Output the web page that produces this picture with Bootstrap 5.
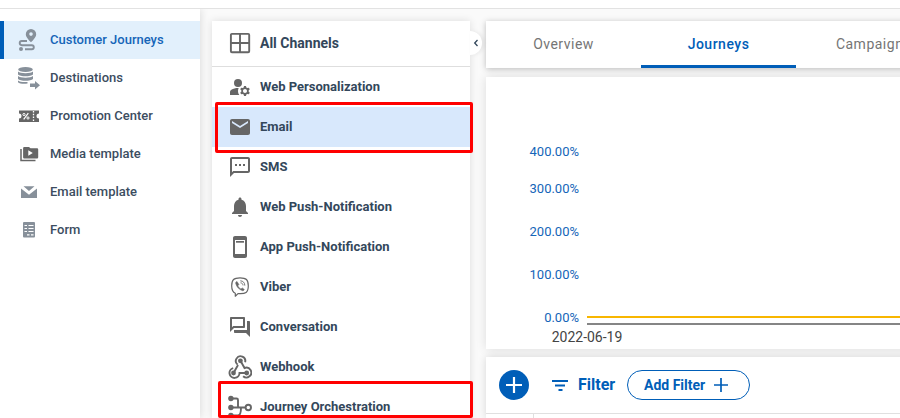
<!DOCTYPE html>
<html lang="en">
<head>
<meta charset="utf-8">
<meta name="viewport" content="width=device-width, initial-scale=1">
<title>Customer Journeys</title>
<link href="https://cdn.jsdelivr.net/npm/bootstrap@5.3.0/dist/css/bootstrap.min.css" rel="stylesheet">
<style>
body { font-family: Roboto, "Liberation Sans", sans-serif; font-size: 13px; line-height: 20px; background: #fafafa; color: #33475b; }
svg { flex: none; display: block; }
.app-shell { height: 418px; }
.top-strip { height: 9px; border-bottom: 1px solid #e2e2e2; }
.side-menu { width: 200px; padding-top: 12px; box-shadow: 1px 0 8px rgba(0,0,0,.12); clip-path: inset(0 -12px 0 0); }
.side-link { height: 38px; gap: 10px; padding-left: 12px; border-left: 4px solid transparent; font-weight: 500; color: #3c4d5f; }
.side-link.current { background: #e2f0fc; border-color: #005eb8; color: #1565b8; }
.side-link svg { color: #87909a; }
.workspace { padding: 12px 0 0 12px; gap: 16px; }
.channel-panel { width: 258px; box-shadow: 0 0 8px rgba(0,0,0,.12); }
.channel-head { height: 46px; border-bottom: 1px solid #dedede; font-size: 14px; padding: 0 0 2px 16px; gap: 8px; font-weight: 700; }
.channel-head svg { margin-top: 2px; }
.channel-item { height: 40px; padding-left: 16px; gap: 8px; font-weight: 700; }
.channel-item.current { background: #d8e8fc; }
.channel-panel svg { color: #666; }
.outline-red { position: absolute; border: 3px solid #f00; border-radius: 2px; z-index: 3; }
.outline-email { left: 3px; right: -3px; top: -5px; height: 51px; }
.outline-orch { left: 6px; right: -3px; top: -6px; height: 37px; }
.fold-btn { position: absolute; left: 258px; top: 10px; width: 12px; height: 24px; border-radius: 0 12px 12px 0; box-shadow: 2px 0 4px rgba(0,0,0,.07); }
.main-col { gap: 8px; }
.tab-bar { height: 47px; margin-bottom: 1px; box-shadow: 0 1px 6px rgba(0,0,0,.25); overflow: visible; }
.tab-cell { width: 155px; flex: none; font-size: 14px; letter-spacing: .5px; padding-top: 2px; color: #757575; border-bottom: 3px solid transparent; }
.tab-cell.current { color: #005eb8; font-weight: 500; border-color: #005eb8; }
.chart-box { height: 272px; box-shadow: 0 0 10px rgba(0,0,0,.12); }
.filter-box { height: 61px; box-shadow: 0 0 8px rgba(0,0,0,.14); color: #005eb8; }
.filter-row { height: 57px; border-bottom: 1px solid #e0e0e0; padding-left: 13px; }
.add-round { width: 30px; height: 30px; background: #005eb8; color: #fff; margin-right: 20px; }
.filter-word { font-size: 16px; font-weight: 700; margin: 0 11px 0 7px; width: 38px; }
.add-pill { height: 30px; width: 123px; border: 1px solid #005eb8; padding: 0 0 0 16px; font-size: 14px; font-weight: 700; color: #005eb8; }
.table-edge { width: 48px; height: 5px; border-right: 1px solid #e0e0e0; }
</style>
<script src="https://cdn.jsdelivr.net/npm/bootstrap@5.3.0/dist/js/bootstrap.bundle.min.js"></script>
</head>
<body>
<div class="app-shell d-flex flex-column overflow-hidden">
  <header class="top-strip bg-white flex-shrink-0"></header>
  <div class="d-flex flex-grow-1 overflow-hidden">
    <nav class="side-menu bg-white flex-shrink-0">
      <div class="side-link current d-flex align-items-center">
        <svg width="24" height="24" viewBox="0 0 24 24"><path fill="currentColor" fill-rule="evenodd" d="M15 1a5.2 5.2 0 0 0-5.2 5.2c0 3.6 5.2 8 5.2 8s5.2-4.4 5.2-8A5.2 5.2 0 0 0 15 1zm0 3.3a1.8 1.8 0 1 1 0 3.6 1.8 1.8 0 0 1 0-3.6z"/><path d="M11 13H5.8a1.9 1.9 0 0 0 0 4.2h10a2 2 0 0 1 0 4H9" fill="none" stroke="currentColor" stroke-width="1.9"/><circle cx="5" cy="21" r="2" fill="currentColor"/></svg>
        <span>Customer Journeys</span>
      </div>
      <div class="side-link d-flex align-items-center">
        <svg width="24" height="24" viewBox="0 0 24 24"><g fill="currentColor"><ellipse cx="9.5" cy="3.6" rx="7.3" ry="2.5"/><path d="M2 5.5c2 2.2 13 2.2 15 0v3c-2 2.4-13 2.4-15 0zM2 10c2 2.2 13 2.2 15 0v3c-2 2.4-13 2.4-15 0zM2 14.500c1.500 1.400 6 1.800 9.500 1.400v1.500c-3.500.8-8 .2-9.500-1.200z"/><path d="M14 17.500h5V15l5 4.300-5 4.200V21h-5z"/></g></svg>
        <span>Destinations</span>
      </div>
      <div class="side-link d-flex align-items-center">
        <svg width="24" height="24" viewBox="0 0 24 24"><path fill="#666" d="M3 6.500h20v3a2.500 2.500 0 0 0 0 5v3.500H3v-3.500a2.500 2.500 0 0 0 0-5z"/><g fill="none" stroke="#fff"><path d="M17.500 7v11" stroke-width="1.300" stroke-dasharray="1.500 1.300"/><path d="M12.300 9.200l-4.600 6.200" stroke-width="1.200"/><circle cx="8" cy="10.500" r="1.100"/><circle cx="12" cy="14" r="1.100"/></g></svg>
        <span>Promotion Center</span>
      </div>
      <div class="side-link d-flex align-items-center">
        <svg width="24" height="24" viewBox="0 0 24 24"><path d="M5 7v11.500h14.500" fill="none" stroke="#666" stroke-width="1.500"/><path fill="#666" fill-rule="evenodd" d="M8.500 5H13l1.500 1.200h6.300c.8 0 1.400.5 1.400 1.300v7.700c0 .8-.6 1.300-1.400 1.300H8.500c-.8 0-1.400-.5-1.400-1.300V6.300C7.100 5.500 7.700 5 8.500 5zM12.300 8.300v5.400l4.500-2.700z"/></svg>
        <span>Media template</span>
      </div>
      <div class="side-link d-flex align-items-center">
        <svg width="24" height="24" viewBox="0 0 24 24"><path fill="currentColor" d="M5 8.500l8 6.300 8-6.300V18H5zM7.500 6.200h11L13 11z"/></svg>
        <span>Email template</span>
      </div>
      <div class="side-link d-flex align-items-center">
        <svg width="24" height="24" viewBox="0 0 24 24"><rect x="7" y="4" width="12" height="15.500" rx="1" fill="currentColor"/><path d="M8.500 7.500H11M12.500 7.500h5M8.500 10.500H11M12.500 10.500h5M8.500 13.500H11M12.500 13.500h5M11 16.800h2.500M15 16.800h2.500" stroke="#fff" stroke-width="1.200"/></svg>
        <span>Form</span>
      </div>
    </nav>

    <div class="workspace d-flex flex-grow-1 overflow-hidden">
      <aside class="channel-panel bg-white flex-shrink-0 position-relative">
        <div class="channel-head d-flex align-items-center">
          <svg width="24" height="24" viewBox="0 0 24 24" fill="none" stroke="currentColor" stroke-width="1.900"><rect x="2.900" y="1.900" width="18.300" height="18.300" rx="1"/><path d="M12 2v18M3 11h18"/></svg>
          <span>All Channels</span>
        </div>
        <div class="fold-btn bg-white d-flex align-items-center justify-content-center"><svg width="12" height="12" viewBox="0 0 12 12" fill="none" stroke="#33475b" stroke-width="1.300"><path d="M7.500 3L4.700 6l2.800 3"/></svg></div>
        <div class="channel-item d-flex align-items-center">
          <svg width="24" height="24" viewBox="0 0 24 24" fill="currentColor"><circle cx="10" cy="8" r="4"/><path d="M10.670 13.020C10.450 13.010 10.230 13 10 13c-2.420 0-4.680.670-6.610 1.820C2.510 15.340 2 16.320 2 17.350V20h9.260C10.470 18.870 10 17.490 10 16c0-1.070.250-2.070.670-2.980z"/><path d="M20.750 16c0-.220-.030-.420-.060-.630l1.140-1.010-1-1.730-1.450.490c-.320-.270-.680-.480-1.080-.630L18 11h-2l-.3 1.490c-.4.150-.760.360-1.080.630l-1.450-.490-1 1.730 1.140 1.010c-.030.210-.060.410-.060.630s.030.420.060.630l-1.140 1.010 1 1.730 1.450-.490c.320.270.680.480 1.080.630L16 21h2l.3-1.490c.4-.150.760-.360 1.080-.630l1.450.490 1-1.730-1.140-1.010c.030-.210.060-.410.060-.630zM17 18c-1.100 0-2-.9-2-2s.9-2 2-2 2 .9 2 2-.9 2-2 2z"/></svg>
          <span>Web Personalization</span>
        </div>
        <div class="channel-item current d-flex align-items-center position-relative">
          <svg width="24" height="24" viewBox="0 0 24 24" fill="currentColor"><path d="M20 4H4c-1.100 0-1.990.9-1.990 2L2 18c0 1.100.9 2 2 2h16c1.100 0 2-.9 2-2V6c0-1.100-.9-2-2-2zm0 4l-8 5-8-5V6l8 5 8-5v2z"/></svg>
          <span>Email</span>
          <div class="outline-red outline-email"></div>
        </div>
        <div class="channel-item d-flex align-items-center">
          <svg width="24" height="24" viewBox="0 0 24 24" fill="currentColor"><path d="M20 2H4c-1.100 0-2 .9-2 2v18l4-4h14c1.100 0 2-.9 2-2V4c0-1.100-.9-2-2-2zm0 14H5.170L4 17.170V4h16v12zM7 9h2v2H7zm4 0h2v2h-2zm4 0h2v2h-2z"/></svg>
          <span>SMS</span>
        </div>
        <div class="channel-item d-flex align-items-center">
          <svg width="24" height="24" viewBox="0 0 24 24" fill="currentColor"><path d="M12 22c1.100 0 2-.9 2-2h-4c0 1.100.890 2 2 2zm6-6v-5c0-3.070-1.640-5.640-4.500-6.320V4c0-.830-.670-1.500-1.500-1.500s-1.500.670-1.500 1.500v.680C7.630 5.360 6 7.920 6 11v5l-2 2v1h16v-1l-2-2z"/></svg>
          <span>Web Push-Notification</span>
        </div>
        <div class="channel-item d-flex align-items-center">
          <svg width="24" height="24" viewBox="0 0 24 24" fill="currentColor"><path fill-rule="evenodd" d="M7 1h10c1.100 0 2 .9 2 2v18c0 1.100-.9 2-2 2H7c-1.100 0-2-.9-2-2V3c0-1.100.9-2 2-2zm0 4v14h10V5z"/><path d="M8 6h8v1.700H8z"/></svg>
          <span>App Push-Notification</span>
        </div>
        <div class="channel-item d-flex align-items-center">
          <svg width="24" height="24" viewBox="0 0 24 24" fill="none" stroke="currentColor" stroke-width="1.200" stroke-linejoin="round"><path d="M12 2.800c-6.200 0-8.300 1.800-8.300 8 0 4.200.8 6.400 3.600 7.400v3l2.700-2.600c7.800.6 10.300-1 10.300-7.800 0-6.200-2.100-8-8.300-8z"/><path d="M9 6.500c-1 .4-1.600 1-1.300 2 1 3.600 3.300 6 6.800 7.200.8.200 1.500-.6 1.800-1.300l-2-1.500-1.300 1c-1.500-.6-2.600-1.700-3.100-3.200l1-1.200z" fill="currentColor" stroke-width=".5"/><path d="M12.300 5.800c2.900.2 4.500 1.900 4.500 4.800M12.500 7.800c1.600.2 2.400 1 2.500 2.600" stroke-width=".9"/></svg>
          <span>Viber</span>
        </div>
        <div class="channel-item d-flex align-items-center">
          <svg width="24" height="24" viewBox="0 0 24 24" fill="currentColor"><path d="M15 4v7H5.170L4 12.170V4h11m1-2H3c-.550 0-1 .450-1 1v14l4-4h10c.550 0 1-.450 1-1V3c0-.550-.450-1-1-1zm5 4h-2v9H6v2c0 .550.450 1 1 1h11l4 4V7c0-.550-.450-1-1-1z"/></svg>
          <span>Conversation</span>
        </div>
        <div class="channel-item d-flex align-items-center">
          <svg width="24" height="24" viewBox="0 0 24 24" fill="none" stroke="currentColor" stroke-width="1.900"><path d="M9.700 9.700a4.700 4.700 0 1 1 7.400-2.500M12.500 5.800l4 7.200a4.900 4.900 0 1 1-1.400 8.200M19 18h-7.500a5 5 0 1 1-6.300-4.900M5.500 18l4.500-8"/><g fill="currentColor" stroke="none"><circle cx="12.400" cy="5.800" r="2.400"/><circle cx="5.500" cy="18" r="2.400"/><circle cx="18.700" cy="18" r="2.400"/></g></svg>
          <span>Webhook</span>
        </div>
        <div class="channel-item d-flex align-items-center position-relative">
          <svg width="24" height="24" viewBox="0 0 24 24"><g fill="none" stroke="currentColor" stroke-width="1.900"><path d="M3 3.500h5.500q1.500 0 1.500 1.500v6q0 1.500 2 1.500h5M3 12.500h10q0 8-3 8H3"/><circle cx="20.300" cy="12.500" r="2.700"/></g><g fill="currentColor"><circle cx="2.900" cy="3.500" r="2.700"/><circle cx="2.900" cy="12.500" r="2.700"/><circle cx="2.900" cy="20.500" r="2.700"/></g></svg>
          <span>Journey Orchestration</span>
          <div class="outline-red outline-orch"></div>
        </div>
      </aside>

      <main class="main-col d-flex flex-column flex-grow-1">
        <div class="tab-bar bg-white d-flex flex-shrink-0">
          <div class="tab-cell d-flex align-items-center justify-content-center">Overview</div>
          <div class="tab-cell current d-flex align-items-center justify-content-center">Journeys</div>
          <div class="tab-cell d-flex align-items-center justify-content-center">Campaigns</div>
        </div>
        <section class="chart-box bg-white flex-shrink-0">
          <svg width="414" height="272" font-family="Roboto, sans-serif">
            <g font-size="13" fill="#1565b8" text-anchor="end">
              <text x="93" y="79">400.00%</text><text x="93" y="116">300.00%</text><text x="93" y="159">200.00%</text><text x="93" y="202">100.00%</text><text x="93" y="245">0.00%</text>
            </g>
            <path d="M101 240h313" stroke="#f8b600" stroke-width="2"/>
            <path d="M101 247h313" stroke="#858585" stroke-width="2"/>
            <text x="101" y="265" font-size="14" fill="#444" text-anchor="middle">2022-06-19</text>
          </svg>
        </section>
        <section class="filter-box bg-white flex-shrink-0">
          <div class="filter-row d-flex align-items-center">
            <div class="add-round rounded-circle d-flex align-items-center justify-content-center"><svg width="18" height="18" viewBox="0 0 18 18" stroke="currentColor" stroke-width="2.200"><path d="M9 1v16M1 9h16"/></svg></div>
            <svg width="22" height="16" viewBox="0 0 22 16" stroke="currentColor" stroke-width="1.800"><path d="M3 4h16M6 8.500h10M9.500 13h4"/></svg>
            <span class="filter-word">Filter</span>
            <button type="button" class="btn add-pill rounded-pill d-flex align-items-center"><span>Add Filter</span><svg class="ms-2" width="16" height="16" viewBox="0 0 16 16" stroke="currentColor" stroke-width="1.700"><path d="M8 1v14M1 8h14"/></svg></button>
          </div>
          <div class="table-edge"></div>
        </section>
      </main>
    </div>
  </div>
</div>
</body>
</html>
